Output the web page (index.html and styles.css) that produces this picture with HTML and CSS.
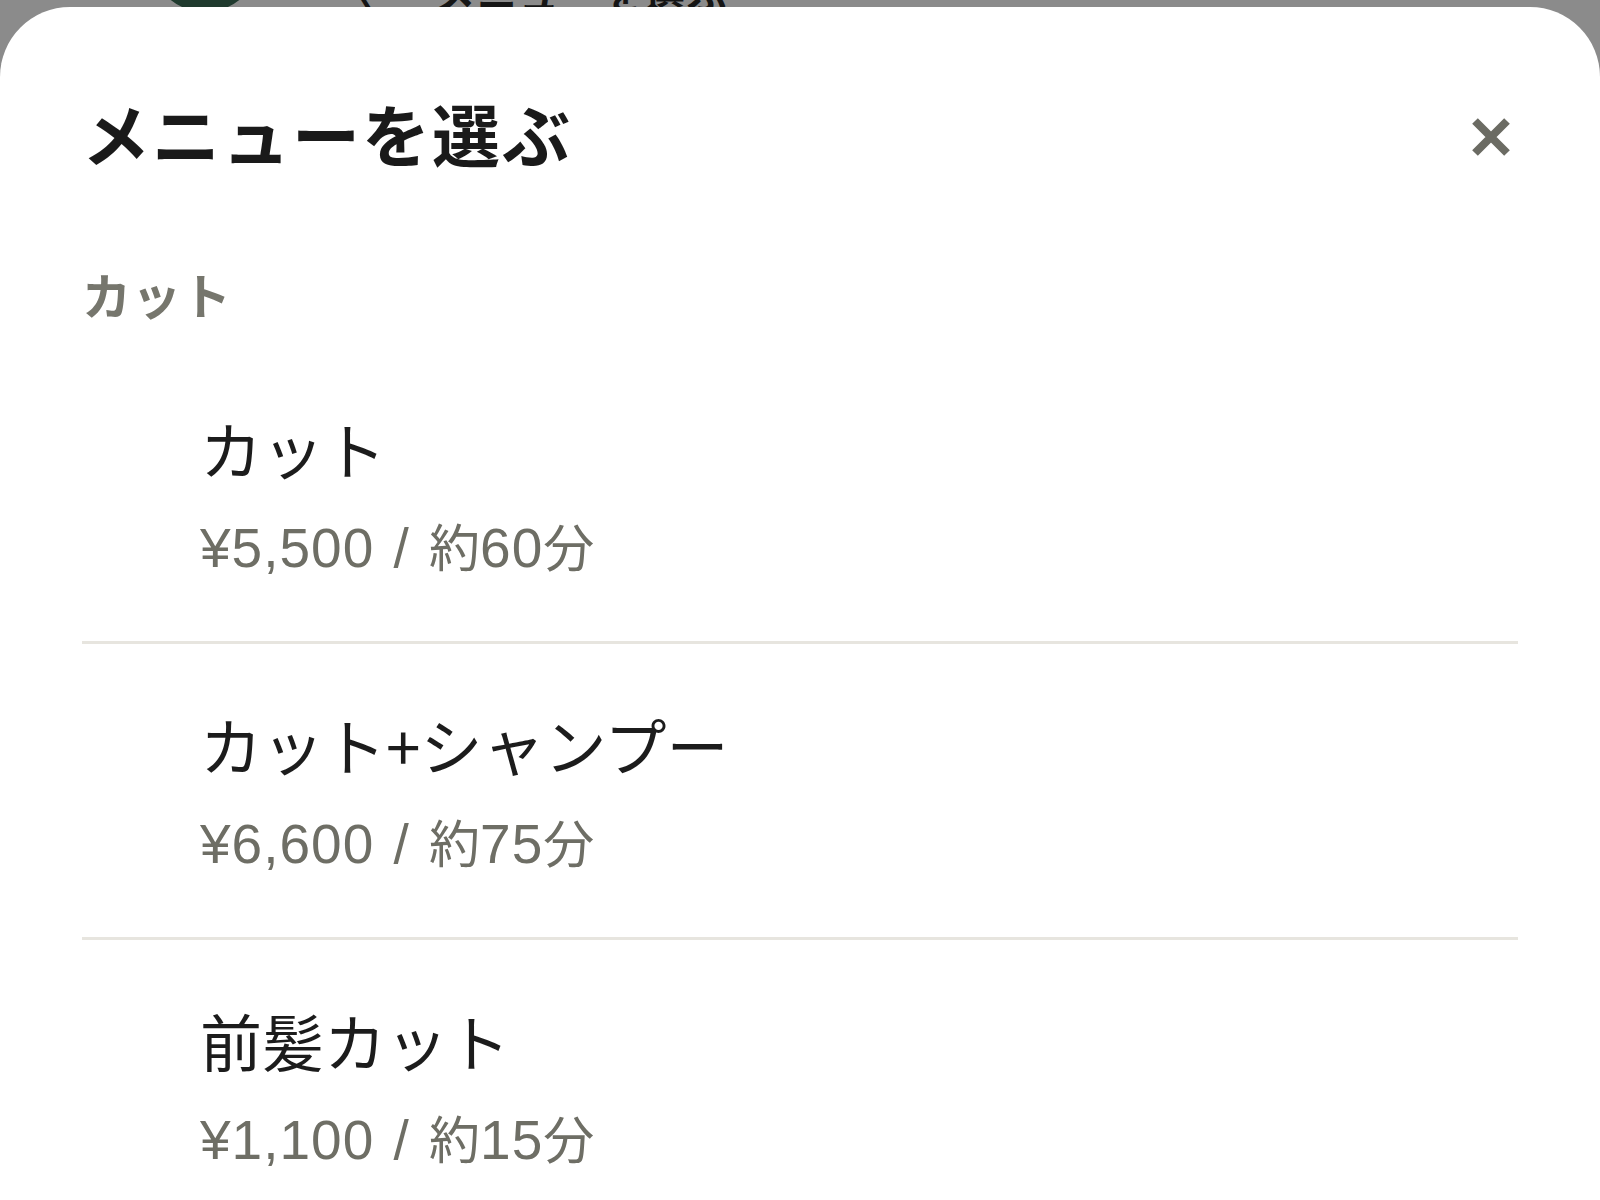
FILE: index.html
```html
<!DOCTYPE html>
<html lang="ja">
<head>
<meta charset="utf-8">
<title>メニューを選ぶ</title>
<link rel="stylesheet" href="styles.css">
</head>
<body>
<div class="screen">
  <div class="backdrop">
    <div class="backdrop-row">
      <span class="backdrop-avatar"></span>
      <span class="backdrop-back">〈</span>
      <span class="backdrop-title">メニューを選ぶ</span>
    </div>
  </div>
  <section class="sheet">
    <header class="sheet-header">
      <h1 class="sheet-title">メニューを選ぶ</h1>
      <button class="close-btn" aria-label="閉じる">
        <svg viewBox="0 0 40 40" width="40" height="40"><path d="M4 4 L36 36 M36 4 L4 36" stroke="#6b6b63" stroke-width="8" stroke-linecap="butt"/></svg>
      </button>
    </header>
    <h2 class="section-label">カット</h2>
    <ul class="menu-list">
      <li class="menu-item">
        <div class="menu-name">カット</div>
        <div class="menu-meta">¥5,500 / <span class="jp">約</span>60<span class="jp">分</span></div>
      </li>
      <li class="menu-item">
        <div class="menu-name">カット+シャンプー</div>
        <div class="menu-meta">¥6,600 / <span class="jp">約</span>75<span class="jp">分</span></div>
      </li>
      <li class="menu-item">
        <div class="menu-name">前髪カット</div>
        <div class="menu-meta">¥1,100 / <span class="jp">約</span>15<span class="jp">分</span></div>
      </li>
    </ul>
  </section>
</div>
</body>
</html>
```
FILE: styles.css
```css
* { box-sizing: border-box; }
html, body { margin: 0; padding: 0; }
body {
  width: 1600px;
  height: 1200px;
  overflow: hidden;
  background: #8b8b8b;
  font-family: "Noto Sans CJK JP", "Noto Sans", sans-serif;
}
.screen { display: flex; flex-direction: column; height: 1200px; }
.backdrop { height: 7px; flex-shrink: 0; overflow: hidden; }
.backdrop-row {
  display: flex;
  align-items: flex-end;
  padding-left: 150px;
  margin-top: -108px;
  height: 120px;
}
.backdrop-avatar {
  width: 110px; height: 110px; border-radius: 50%;
  background: #1f3a2e;
  flex-shrink: 0;
}
.backdrop-back {
  margin-left: 75px;
  font-size: 40px; line-height: 40px; font-weight: 700; color: #151515;
}
.backdrop-title {
  margin-left: 60px;
  font-size: 40px; font-weight: 700; color: #151515; line-height: 40px;
  white-space: nowrap; letter-spacing: 2px;
}
.sheet {
  flex: 1;
  min-height: 0;
  overflow: hidden;
  background: #ffffff;
  border-radius: 70px 70px 0 0;
  padding: 0 82px;
}
.sheet-header {
  display: flex;
  align-items: center;
  justify-content: space-between;
  padding-top: 81px;
}
.sheet-title {
  margin: 0;
  font-size: 68px;
  font-weight: 700;
  letter-spacing: 2px;
  line-height: 90px;
  color: #1a1a1a;
}
.close-btn {
  border: 0; background: none; padding: 0; margin: 8px 7px 0 0;
  width: 40px; height: 40px; display: flex;
}
.section-label {
  margin: 84px 0 0;
  font-size: 49px;
  font-weight: 700;
  letter-spacing: 1px;
  line-height: 64px;
  color: #76766d;
}
.menu-list { list-style: none; margin: 0; padding: 0; }
.menu-item {
  padding: 60px 0 60px 118px;
  border-bottom: 3px solid #e7e5df;
}
.menu-item:first-child { padding-top: 82px; }
.menu-name {
  font-size: 62px;
  line-height: 80px;
  color: #1c1c1c;
}
.menu-meta {
  margin-top: 27px;
  font-family: "Liberation Sans", "Noto Sans CJK JP", sans-serif;
  font-size: 55px;
  letter-spacing: 1px;
  word-spacing: 3px;
  line-height: 66px;
  color: #6e6e65;
}
.menu-meta .jp {
  font-family: "Noto Sans CJK JP", sans-serif;
  font-size: 51px;
  line-height: 0;
  letter-spacing: 0;
}
```
